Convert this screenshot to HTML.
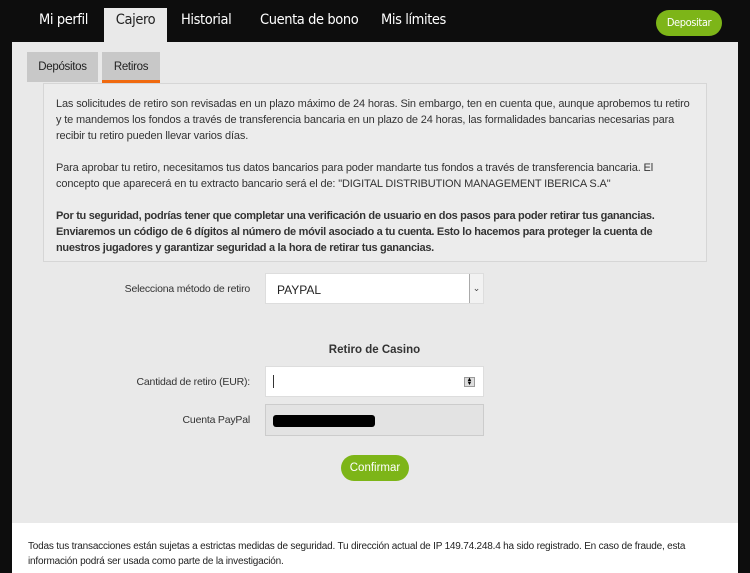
<!DOCTYPE html>
<html><head><meta charset="utf-8"><style>
*{margin:0;padding:0;box-sizing:border-box}
body{width:750px;height:573px;background:#0d0d0d;font-family:"Liberation Sans",sans-serif;position:relative;overflow:hidden}
.nav{position:absolute;top:0;left:0;width:750px;height:42px}
.nav span{position:absolute;top:12px;color:#fff;font-size:14.5px;letter-spacing:-0.4px;font-family:"DejaVu Sans Condensed","Liberation Sans Narrow","Liberation Sans",sans-serif}
.nav .act{top:8px;left:104px;width:63px;height:35px;background:#e9e9e9;color:#222;padding-top:4px;text-align:center}
.dep{position:absolute;left:656px;top:10px;width:66px;height:26px;border-radius:13px;background:#7db518;color:#fff;font-size:11px;letter-spacing:-0.4px;text-align:center;line-height:26px;font-family:"DejaVu Sans Condensed",sans-serif}
.panel{position:absolute;left:12px;top:42px;width:726px;height:481px;background:#e9e9e9}
.foot{position:absolute;left:12px;top:523px;width:726px;height:50px;background:#fff;font-size:10px;color:#222;padding:16px 30px 0 16px;line-height:15px;letter-spacing:-0.2px}
.tab{position:absolute;top:52px;height:30px;background:#c8c8c8;font-size:11.5px;color:#222;text-align:center;line-height:30px;letter-spacing:-0.3px}
.box{position:absolute;left:43px;top:83px;width:664px;height:179px;border:1px solid #d6d6d6;background:#ececec;padding:12px 12px;font-size:11px;line-height:16px;color:#333;letter-spacing:-0.15px}
.box p{margin-bottom:16px}
.lbl{position:absolute;font-size:10.5px;color:#333;text-align:right;width:250px;left:0;letter-spacing:-0.2px}
.inp{position:absolute;left:265px;width:219px;height:31px;background:#fff;border:1px solid #ddd}
</style></head><body>
<div class="nav">
<span style="left:39px">Mi perfil</span>
<span class="act">Cajero</span>
<span style="left:181px">Historial</span>
<span style="left:260px">Cuenta de bono</span>
<span style="left:381px">Mis límites</span>
</div>
<div class="dep">Depositar</div>
<div class="panel"></div>
<div class="tab" style="left:27px;width:71px">Depósitos</div>
<div class="tab" style="left:102px;width:58px;border-bottom:3px solid #f06a10;height:31px">Retiros</div>
<div class="box">
<p>Las solicitudes de retiro son revisadas en un plazo máximo de 24 horas. Sin embargo, ten en cuenta que, aunque aprobemos tu retiro y te mandemos los fondos a través de transferencia bancaria en un plazo de 24 horas, las formalidades bancarias necesarias para recibir tu retiro pueden llevar varios días.</p>
<p>Para aprobar tu retiro, necesitamos tus datos bancarios para poder mandarte tus fondos a través de transferencia bancaria. El concepto que aparecerá en tu extracto bancario será el de: "DIGITAL DISTRIBUTION MANAGEMENT IBERICA S.A"</p>
<p style="font-weight:bold;margin:0;letter-spacing:-0.3px">Por tu seguridad, podrías tener que completar una verificación de usuario en dos pasos para poder retirar tus ganancias. Enviaremos un código de 6 dígitos al número de móvil asociado a tu cuenta. Esto lo hacemos para proteger la cuenta de nuestros jugadores y garantizar seguridad a la hora de retirar tus ganancias.</p>
</div>
<div class="lbl" style="top:283px">Selecciona método de retiro</div>
<div class="inp" style="top:273px;height:31px;font-size:12px;padding:9px 0 0 11px;color:#222">PAYPAL<div style="position:absolute;right:0;top:0;width:14px;height:29px;border-left:1px solid #aaa;background:#f2f2f2;font-size:9px;text-align:center;line-height:29px;color:#444">&#8964;</div></div>
<div style="position:absolute;left:265px;width:219px;top:344px;text-align:center;font-size:11.5px;font-weight:bold;color:#333">Retiro de Casino</div>
<div class="lbl" style="top:376px">Cantidad de retiro (EUR):</div>
<div class="inp" style="top:366px;height:31px"><div style="position:absolute;left:7px;top:8px;width:1px;height:13px;background:#333"></div><div style="position:absolute;right:8px;top:10px;width:11px;height:10px;background:#ddd;border:1px solid #999;font-size:6px;line-height:4px;text-align:center">▲<br>▼</div></div>
<div class="lbl" style="top:414px">Cuenta PayPal</div>
<div class="inp" style="top:404px;height:32px;background:#e3e3e3;border-color:#ccc"><div style="position:absolute;left:7px;top:10px;width:102px;height:12px;background:#000;border-radius:3px"></div></div>
<div style="position:absolute;left:341px;top:455px;width:68px;height:26px;border-radius:13px;background:#7db518;color:#fff;font-size:11.5px;text-align:center;line-height:26px">Confirmar</div>
<div class="foot">Todas tus transacciones están sujetas a estrictas medidas de seguridad. Tu dirección actual de IP 149.74.248.4 ha sido registrado. En caso de fraude, esta información podrá ser usada como parte de la investigación.</div>
</body></html>
